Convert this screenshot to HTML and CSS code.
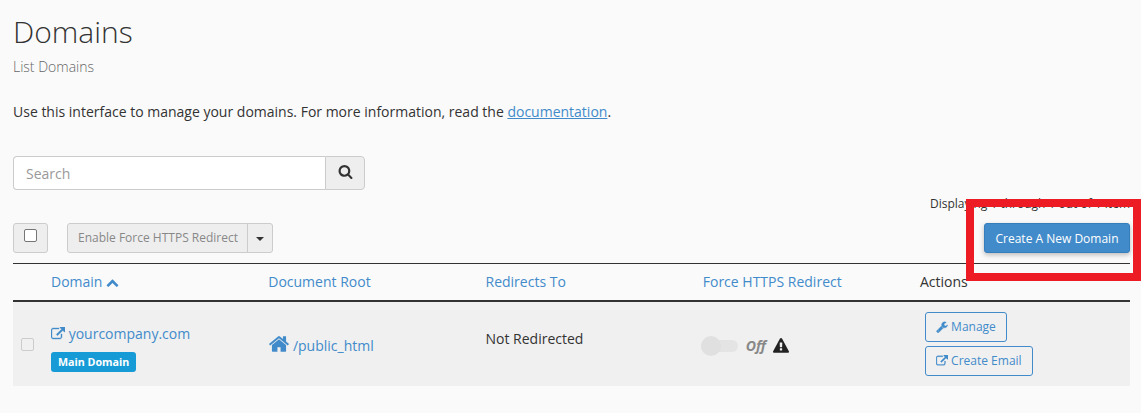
FILE: index.html
```html
<!DOCTYPE html>
<html>
  <head>
    <title>Domains</title>
    <link rel="stylesheet" href="styles.css">
  </head>
  <body>
    <svg class="icon-defs" width="0" height="0">
      <symbol id="i-link" viewBox="0 0 1792 1792"><path d="M1408 928v320q0 119-84.500 203.500t-203.500 84.500h-832q-119 0-203.500-84.500t-84.500-203.500v-832q0-119 84.500-203.500t203.500-84.500h704q14 0 23 9t9 23v64q0 14-9 23t-23 9h-704q-66 0-113 47t-47 113v832q0 66 47 113t113 47h832q66 0 113-47t47-113v-320q0-14 9-23t23-9h64q14 0 23 9t9 23zm384-864v512q0 26-19 45t-45 19-45-19l-176-176-652 652q-10 10-23 10t-23-10l-114-114q-10-10-10-23t10-23l652-652-176-176q-19-19-19-45t19-45 45-19h512q26 0 45 19t19 45z"/></symbol>
      <symbol id="i-home" viewBox="0 0 1792 1792"><path d="M1472 992v480q0 26-19 45t-45 19h-384v-384h-256v384h-384q-26 0-45-19t-19-45v-480q0-1 .5-3t.5-3l575-474 575 474q1 2 1 6zm223-69l-62 74q-8 9-21 11h-3q-13 0-21-7l-692-577-692 577q-12 8-24 7-13-2-21-11l-62-74q-8-10-7-23.500t11-21.500l719-599q32-26 76-26t76 26l244 204v-195q0-14 9-23t23-9h192q14 0 23 9t9 23v408l219 182q10 8 11 21.500t-7 23.500z"/></symbol>
      <symbol id="i-wrench" viewBox="0 0 1792 1792"><path d="M448 1472q0-26-19-45t-45-19-45 19-19 45 19 45 45 19 45-19 19-45zm644-420l-682 682q-37 37-90 37-52 0-91-37l-106-108q-38-36-38-90 0-53 38-91l681-681q39 98 114.500 173.500t173.500 114.500zm634-435q0 39-23 106-47 134-164.500 217.500t-258.500 83.500q-185 0-316.500-131.500t-131.500-316.500 131.500-316.500 316.500-131.500q58 0 121.500 16.500t107.500 46.500q16 11 16 28t-16 28l-293 169v224l193 107q5-3 79-48.500t135.500-81 70.500-35.500q15 0 23.500 10t8.500 25z"/></symbol>
      <symbol id="i-search" viewBox="0 0 1792 1792"><path d="M1216 832q0-185-131.500-316.500t-316.500-131.500-316.500 131.500-131.500 316.500 131.500 316.500 316.500 131.500 316.500-131.500 131.500-316.500zm512 832q0 52-38 90t-90 38q-54 0-90-38l-343-342q-179 124-399 124-143 0-273.500-55.500t-225-150-150-225-55.500-273.500 55.500-273.500 150-225 225-150 273.500-55.500 273.500 55.500 225 150 150 225 55.500 273.500q0 220-124 399l343 343q37 37 37 90z"/></symbol>
      <symbol id="i-warning" viewBox="0 0 1792 1792"><path d="M1024 1375v-190q0-14-9.500-23.500t-22.500-9.500h-192q-13 0-22.500 9.500t-9.500 23.500v190q0 14 9.500 23.500t22.500 9.500h192q13 0 22.500-9.500t9.500-23.500zm-2-374l18-459q0-12-10-19-13-11-24-11h-220q-11 0-24 11-10 7-10 21l17 457q0 10 10 16.500t24 6.500h185q14 0 23.500-6.500t10.500-16.500zm-14-934l768 1408q35 63-2 126-17 29-46.500 46t-63.500 17h-1536q-34 0-63.500-17t-46.500-46q-37-63-2-126l768-1408q17-31 47-49t65-18 65 18 47 49z"/></symbol>
      <symbol id="i-chevron" viewBox="0 0 1792 1792"><path d="M1683 1331l-166 165q-19 19-45 19t-45-19l-531-531-531 531q-19 19-45 19t-45-19l-166-165q-19-19-19-45.500t19-45.500l742-741q19-19 45-19t45 19l742 741q19 19 19 45.500t-19 45.500z"/></symbol>
    </svg>

    <div class="container">
      <h1 class="title">Domains</h1>
      <div class="subtitle">List Domains</div>
      <p class="intro">Use this interface to manage your domains. For more information, read the <a href="#">documentation</a>.</p>

      <div class="search-group">
        <input class="search-input" type="text" placeholder="Search">
        <button class="search-button"><svg class="icon"><use href="#i-search"/></svg></button>
      </div>

      <div class="paging">Displaying 1 through 1 out of 1 item</div>

      <div class="toolbar">
        <div class="select-all"><span class="fake-check"></span></div>
        <div class="split-button">
          <span class="split-main">Enable Force HTTPS Redirect</span>
          <span class="split-caret"></span>
        </div>
        <button class="create-button">Create A New Domain</button>
      </div>

      <table class="domains">
        <thead>
          <tr>
            <th class="col-check"></th>
            <th class="col-main"><a href="#">Domain <svg class="icon sort-icon"><use href="#i-chevron"/></svg></a></th>
            <th class="col-main"><a href="#">Document Root</a></th>
            <th class="col-main"><a href="#">Redirects To</a></th>
            <th class="col-main"><a href="#">Force HTTPS Redirect</a></th>
            <th>Actions</th>
          </tr>
        </thead>
        <tbody>
          <tr>
            <td><span class="row-check"></span></td>
            <td class="domain-cell">
              <a class="domain-link" href="#"><svg class="icon"><use href="#i-link"/></svg> yourcompany.com</a>
              <span class="badge">Main Domain</span>
            </td>
            <td class="root-cell"><a class="root-link" href="#"><svg class="icon home-icon"><use href="#i-home"/></svg> /public_html</a></td>
            <td class="redirect-cell">Not Redirected</td>
            <td>
              <div class="force-cell">
                <span class="toggle"><span class="toggle-knob"></span></span>
                <span class="toggle-label">Off</span>
                <svg class="icon warn-icon"><use href="#i-warning"/></svg>
              </div>
            </td>
            <td>
              <div class="actions">
                <a class="action-button" href="#"><svg class="icon"><use href="#i-wrench"/></svg> Manage</a>
                <a class="action-button" href="#"><svg class="icon"><use href="#i-link"/></svg> Create Email</a>
              </div>
            </td>
          </tr>
        </tbody>
      </table>
    </div>

    <div class="highlight"></div>
  </body>
</html>
```

FILE: styles.css
```css
body {
  margin: 0;
  font-family: "Open Sans", Arial, sans-serif;
  font-size: 14px;
  line-height: 20px;
  background-color: #fafafa;
  color: #333;
  overflow: hidden;
}

a {
  color: #428bca;
  text-decoration: none;
}

.icon-defs {
  position: absolute;
}

.icon {
  width: 14px;
  height: 14px;
  fill: currentColor;
  vertical-align: -2px;
}

.container {
  padding: 0 11px 0 13px;
}

.title {
  margin: 0;
  padding-top: 12px;
  font-size: 30px;
  font-weight: 300;
  line-height: 40px;
}

.subtitle {
  margin-top: 5px;
  color: #666;
  font-weight: 300;
}

.intro {
  margin: 25px 0 0;
}

.intro a {
  text-decoration: underline;
}

.search-group {
  display: flex;
  width: 352px;
  height: 34px;
  margin-top: 34px;
}

.search-input {
  flex: 1;
  min-width: 0;
  padding: 2px 12px 0;
  border: 1px solid #ccc;
  border-right: 0;
  border-radius: 4px 0 0 4px;
  background: #fff;
  font: inherit;
}

.search-input::placeholder {
  color: #999;
  opacity: 1;
}

.search-button {
  width: 40px;
  padding: 0 0 3px;
  border: 1px solid #ccc;
  border-radius: 0 4px 4px 0;
  background: #eee;
  color: #333;
}

.search-button .icon {
  width: 15px;
  height: 15px;
}

.paging {
  margin-top: 5px;
  text-align: right;
  font-size: 12px;
  line-height: 18px;
}

.toolbar {
  display: flex;
  align-items: center;
  height: 30px;
  margin-top: 10px;
}

.select-all {
  display: flex;
  justify-content: center;
  box-sizing: border-box;
  width: 35px;
  height: 30px;
  padding-top: 5px;
  margin-right: 19px;
  border: 1px solid #ccc;
  border-radius: 3px;
  background: #eee;
}

.fake-check {
  box-sizing: border-box;
  width: 13px;
  height: 13px;
  border: 1px solid #767676;
  border-radius: 2px;
  background: #fff;
}

.split-button {
  display: flex;
  height: 30px;
  box-sizing: border-box;
  border: 1px solid #ccc;
  border-radius: 3px;
  background: #eee;
  color: #888;
  font-size: 12px;
  line-height: 28px;
}

.split-main {
  padding: 0 9px 0 10px;
  border-right: 1px solid #ccc;
}

.split-caret {
  position: relative;
  width: 24px;
}

.split-caret::after {
  content: "";
  position: absolute;
  top: 13px;
  left: 8px;
  border-top: 4px solid #333;
  border-left: 4px solid transparent;
  border-right: 4px solid transparent;
}

.create-button {
  width: 146px;
  height: 30px;
  margin-left: auto;
  padding: 0;
  border: 1px solid #357ebd;
  border-radius: 3px;
  background: #428bca;
  box-shadow: 0 2px 5px rgba(0, 0, 0, 0.25);
  color: #fff;
  font-family: inherit;
  font-size: 12px;
}

.domains {
  width: 100%;
  margin-top: 10px;
  border-collapse: collapse;
  table-layout: fixed;
}

.domains th {
  height: 36px;
  padding: 0 8px;
  border-top: 1px solid #333;
  border-bottom: 2px solid #333;
  text-align: left;
  font-weight: 400;
  vertical-align: middle;
}

.col-check {
  width: 14px;
}

.col-main {
  width: 201.25px;
}

.sort-icon {
  width: 13px;
  height: 13px;
}

.domains td {
  box-sizing: border-box;
  height: 85px;
  padding: 0 8px;
  background: #f0f0f0;
  vertical-align: middle;
}

.domains td.domain-cell {
  padding-top: 7px;
}

.domains td.redirect-cell {
  padding-bottom: 11px;
}

.row-check {
  display: block;
  width: 11px;
  height: 11px;
  border: 1px solid #ccc;
  border-radius: 2px;
}

.domain-link {
  display: block;
}

.domain-link .icon,
.action-button .icon {
  stroke: currentColor;
  stroke-width: 50;
  overflow: visible;
}

.badge {
  display: block;
  width: fit-content;
  margin-top: 8px;
  padding: 0 7px;
  border-radius: 3px;
  background: #179bd7;
  color: #fff;
  font-size: 10.7px;
  font-weight: 700;
  line-height: 20px;
}

.root-link {
  font-size: 14px;
}

.home-icon {
  width: 22px;
  height: 22px;
  margin-right: -1px;
  vertical-align: -4px;
}

.force-cell {
  display: flex;
  align-items: center;
  margin-left: -2px;
  padding-top: 3px;
}

.toggle {
  display: block;
  position: relative;
  width: 37px;
  height: 12px;
  border-radius: 6px;
  background: #e4e4e4;
}

.toggle-knob {
  position: absolute;
  top: -4px;
  left: 0;
  width: 20px;
  height: 20px;
  border-radius: 50%;
  background: #e0e0e0;
}

.toggle-label {
  margin-left: 8px;
  color: #888;
  font-style: italic;
  font-weight: 700;
}

.warn-icon {
  width: 16px;
  height: 16px;
  margin-left: 7px;
  color: #222;
}

.actions {
  display: flex;
  flex-direction: column;
  align-items: flex-start;
  gap: 4px;
  margin-left: 5px;
}

.action-button {
  display: block;
  box-sizing: border-box;
  height: 30px;
  padding: 0 10px;
  border: 1px solid #428bca;
  border-radius: 3px;
  font-size: 12px;
  line-height: 28px;
}

.action-button .icon {
  width: 12px;
  height: 12px;
}

.highlight {
  position: absolute;
  top: 199px;
  left: 966px;
  width: 175px;
  height: 82px;
  box-sizing: border-box;
  border: 8px solid #ed1c24;
}
```
